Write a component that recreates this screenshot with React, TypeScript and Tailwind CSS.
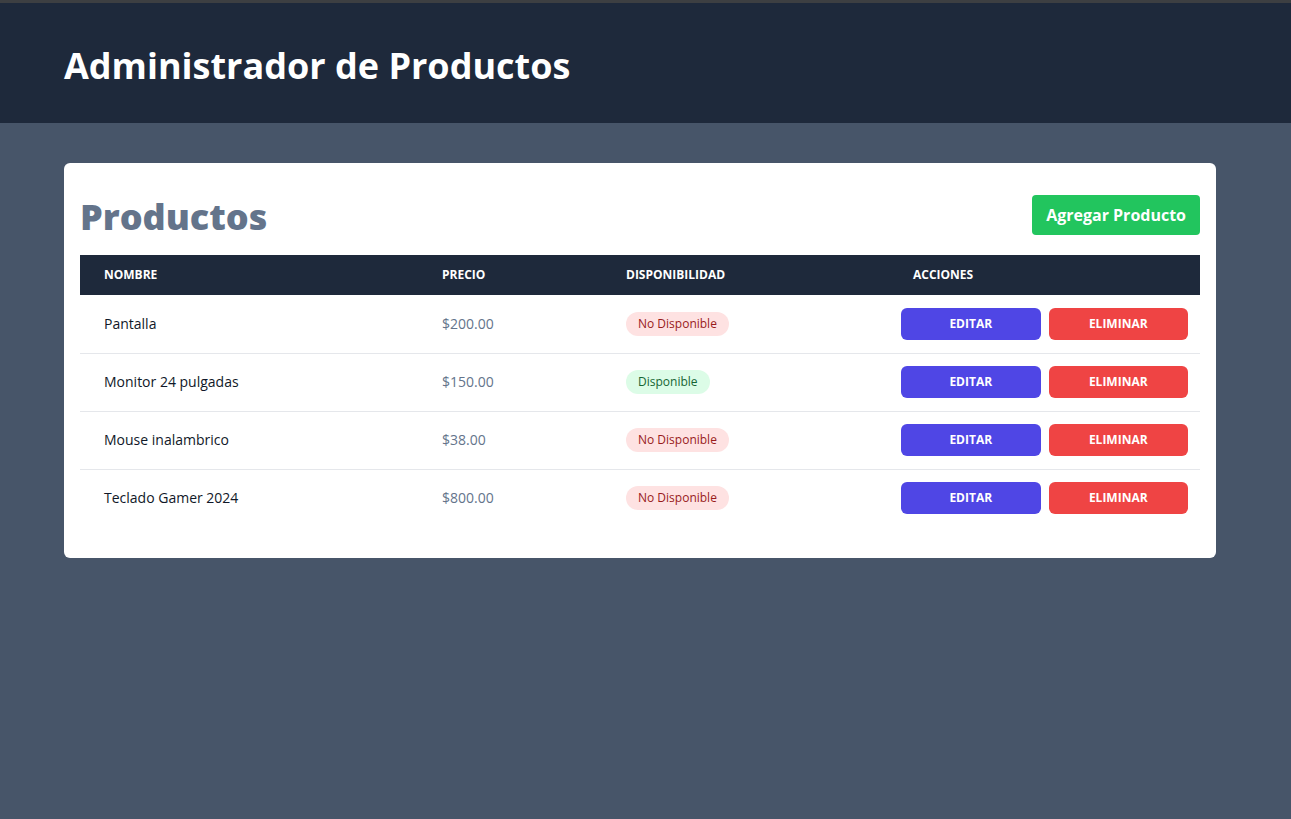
const productos = [
  { nombre: "Pantalla", precio: "$200.00", disponible: false },
  { nombre: "Monitor 24 pulgadas", precio: "$150.00", disponible: true },
  { nombre: "Mouse inalambrico", precio: "$38.00", disponible: false },
  { nombre: "Teclado Gamer 2024", precio: "$800.00", disponible: false },
];

export default function App() {
  return (
    <div className="min-h-[819px] bg-[#475569] font-['Open_Sans',sans-serif] border-t-[3px] border-[#3d3f42]">
      <header className="bg-[#1e293b] h-[120px] flex items-center px-16 pt-[5px]">
        <h1 className="text-4xl font-bold text-white">Administrador de Productos</h1>
      </header>

      <main className="px-16 pt-10">
        <div className="max-w-6xl bg-white rounded-md px-4 pt-8 pb-[31px]">
          <div className="flex items-center justify-between mb-5">
            <h2 className="text-4xl font-extrabold text-[#64748b] translate-y-[2px]">Productos</h2>
            <button className="bg-[#22c55e] text-white font-bold rounded px-[14px] h-10">Agregar Producto</button>
          </div>

          <table className="w-full">
            <thead className="bg-[#1e293b] text-white">
              <tr className="h-10 text-xs font-bold uppercase text-left">
                <th className="px-6 w-[338px]">Nombre</th>
                <th className="px-6 w-[184px]">Precio</th>
                <th className="px-6 w-[287px]">Disponibilidad</th>
                <th className="px-6">Acciones</th>
              </tr>
            </thead>
            <tbody>
              {productos.map((p) => (
                <tr key={p.nombre} className="h-[58px] border-b border-gray-200 last:border-b-0 text-sm">
                  <td className="px-6 text-gray-900">{p.nombre}</td>
                  <td className="px-6 text-[#64748b]">{p.precio}</td>
                  <td className="px-6">
                    {p.disponible ? (
                      <span className="inline-block rounded-full bg-[#dcfce7] text-[#166534] text-xs font-medium px-3 py-1">Disponible</span>
                    ) : (
                      <span className="inline-block rounded-full bg-[#fee2e2] text-[#991b1b] text-xs font-medium px-3 py-1">No Disponible</span>
                    )}
                  </td>
                  <td className="px-3">
                    <div className="flex gap-2">
                      <button className="flex-1 h-8 rounded-md bg-[#4f46e5] text-white text-xs font-bold uppercase">Editar</button>
                      <button className="flex-1 h-8 rounded-md bg-[#ef4444] text-white text-xs font-bold uppercase">Eliminar</button>
                    </div>
                  </td>
                </tr>
              ))}
            </tbody>
          </table>
        </div>
      </main>
    </div>
  );
}
